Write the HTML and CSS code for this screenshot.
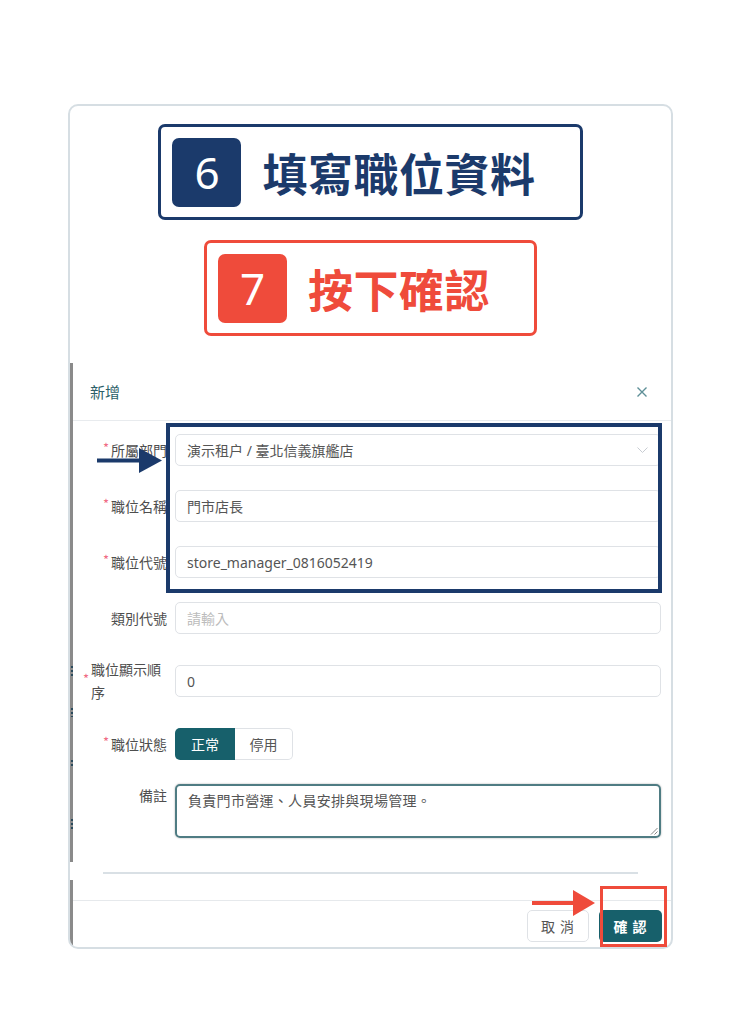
FILE: index.html
```html
<!DOCTYPE html>
<html lang="zh-Hant">
<head>
<meta charset="utf-8">
<title>新增職位</title>
<link rel="stylesheet" href="styles.css">
</head>
<body>
<div class="card">
  <div class="banners">
    <div class="banner banner-navy">
      <div class="badge">6</div>
      <div class="title">填寫職位資料</div>
    </div>
    <div class="banner banner-red">
      <div class="badge">7</div>
      <div class="title">按下確認</div>
    </div>
  </div>

  <div class="dialog">
    <div class="dlg-header">
      <span class="dlg-title">新增</span>
      <svg class="close" width="10" height="10" viewBox="0 0 10 10"><path d="M0.5 0.5 L9.5 9.5 M9.5 0.5 L0.5 9.5" stroke="#5e8f97" stroke-width="1.4" fill="none"/></svg>
    </div>

    <div class="dlg-body">
      <div class="row">
        <div class="label"><span class="req">*</span><span class="ltext">所屬部門</span></div>
        <div class="control select">
          <span>演示租户 / 臺北信義旗艦店</span>
          <svg class="chev" width="11" height="6" viewBox="0 0 11 6"><path d="M0.5 0.5 L5.5 5.5 L10.5 0.5" stroke="#c8ccd2" stroke-width="1" fill="none"/></svg>
        </div>
      </div>
      <div class="row">
        <div class="label"><span class="req">*</span><span class="ltext">職位名稱</span></div>
        <div class="control">門市店長</div>
      </div>
      <div class="row">
        <div class="label"><span class="req">*</span><span class="ltext">職位代號</span></div>
        <div class="control">store_manager_0816052419</div>
      </div>
      <div class="row">
        <div class="label"><span class="ltext">類別代號</span></div>
        <div class="control placeholder">請輸入</div>
      </div>
      <div class="row row-tall">
        <div class="label"><span class="req">*</span><span class="ltext">職位顯示順序</span></div>
        <div class="control">0</div>
      </div>
      <div class="row">
        <div class="label"><span class="req">*</span><span class="ltext">職位狀態</span></div>
        <div class="toggle">
          <span class="tg tg-on">正常</span>
          <span class="tg tg-off">停用</span>
        </div>
      </div>
      <div class="row row-top">
        <div class="label"><span class="ltext">備註</span></div>
        <div class="textarea">
          負責門市營運、人員安排與現場管理。
          <svg class="grip" width="8" height="8" viewBox="0 0 8 8"><path d="M7.5 1 L1 7.5 M7.5 4.5 L4.5 7.5" stroke="#777" stroke-width="0.9" fill="none"/></svg>
        </div>
      </div>
    </div>

    <div class="divider"></div>

    <div class="dlg-footer">
      <span class="btn btn-cancel">取 消</span>
      <span class="btn btn-primary">確 認</span>
    </div>
  </div>
</div>

<div class="hl hl-navy"></div>
<svg class="arrow arrow-navy" width="66" height="25" viewBox="0 0 66 25">
  <rect x="0" y="10.5" width="44" height="4" fill="#1b3a6b"/>
  <polygon points="42,0 65,12.5 42,25" fill="#1b3a6b"/>
</svg>

<div class="hl hl-red"></div>
<svg class="arrow arrow-red" width="65" height="26" viewBox="0 0 65 26">
  <rect x="1" y="11" width="44" height="4" fill="#ef4b3b"/>
  <polygon points="42,0 64,13 42,26" fill="#ef4b3b"/>
</svg>
</body>
</html>
```

FILE: styles.css
```css
* { box-sizing: border-box; }

body {
  margin: 0;
  background: #ffffff;
  font-family: "Noto Sans", "Noto Sans CJK TC", sans-serif;
  color: #555555;
}

.card {
  margin: 104px 0 0 68px;
  width: 605px;
  height: 845px;
  border: 2px solid #d6dee3;
  border-radius: 10px;
  overflow: hidden;
  padding-top: 18px;
  display: flex;
  flex-direction: column;
}

.banners {
  display: flex;
  flex-direction: column;
  align-items: center;
  gap: 20px;
}

.banner {
  display: flex;
  align-items: center;
  gap: 21px;
  height: 96px;
  border: 3px solid;
  border-radius: 7px;
  padding: 0 44px 0 11px;
  background: #fff;
}

.banner-navy { border-color: #1b3a6b; color: #1b3a6b; }
.banner-red { border-color: #ef4b3b; color: #ef4b3b; }

.badge {
  width: 69px;
  height: 69px;
  border-radius: 7px;
  color: #ffffff;
  font-family: "Noto Sans", sans-serif;
  font-size: 44px;
  line-height: 1;
  display: flex;
  align-items: center;
  justify-content: center;
}
.banner-navy .badge { background: #1b3a6b; }
.banner-red .badge { background: #ef4b3b; }

.title {
  font-family: "Noto Sans CJK TC", sans-serif;
  font-weight: 700;
  font-size: 45px;
  line-height: 1;
  letter-spacing: 0.5px;
}

.dialog {
  margin-top: 27px;
  flex: 1;
  padding-left: 3px;
  display: flex;
  flex-direction: column;
  background:
    repeating-linear-gradient(#2a4a5c 0 2px, #8e8e8e 2px 4px) 1px 303px / 2px 11px no-repeat,
    repeating-linear-gradient(#2a4a5c 0 2px, #8e8e8e 2px 4px) 1px 345px / 2px 9px no-repeat,
    repeating-linear-gradient(#2a4a5c 0 2px, #8e8e8e 2px 4px) 1px 397px / 2px 7px no-repeat,
    repeating-linear-gradient(#2a4a5c 0 2px, #8e8e8e 2px 4px) 1px 456px / 2px 11px no-repeat,
    linear-gradient(to bottom, #8a8a8a 0 499px, #ffffff 499px 517px, #8a8a8a 517px) 0 0 / 3px 100% no-repeat;
}

.dlg-header {
  height: 58px;
  border-bottom: 1px solid #e8ebee;
  display: flex;
  align-items: center;
  justify-content: space-between;
  padding: 0 24px 0 17px;
}

.dlg-title {
  font-family: "Noto Sans CJK TC", sans-serif;
  font-size: 15px;
  color: #2c5f69;
}

.close { display: block; }

.dlg-body {
  padding: 13px 10px 0 10px;
  display: flex;
  flex-direction: column;
  gap: 24px;
}

.row {
  display: flex;
  align-items: center;
}
.row-tall { height: 46px; }
.row-top { align-items: flex-start; }

.label {
  width: 92px;
  flex: none;
  padding-right: 8px;
  display: flex;
  align-items: center;
  justify-content: flex-end;
  font-family: "Noto Sans CJK TC", sans-serif;
  font-size: 14px;
  line-height: 23px;
  color: #4e4e4e;
}

.req {
  color: #f06a84;
  font-size: 13px;
  line-height: 1;
  margin-right: 2px;
  margin-top: -5px;
  flex: none;
}

.ltext { min-width: 0; }

.control {
  flex: 1;
  height: 32px;
  border: 1px solid #dfe2e6;
  border-radius: 5px;
  padding: 0 11px;
  display: flex;
  align-items: center;
  font-family: "Noto Sans", "Noto Sans CJK TC", sans-serif;
  font-size: 14px;
  color: #555555;
}

.select { justify-content: space-between; padding-right: 12px; }
.chev { display: block; }

.placeholder { color: #bcbcbc; }

.toggle {
  display: flex;
  height: 32px;
}
.tg {
  display: flex;
  align-items: center;
  justify-content: center;
  font-family: "Noto Sans CJK TC", sans-serif;
  font-size: 14px;
}
.tg-on {
  width: 60px;
  background: #17606b;
  color: #ffffff;
  border-radius: 5px 0 0 5px;
}
.tg-off {
  width: 58px;
  border: 1px solid #dfe2e6;
  border-left: none;
  border-radius: 0 5px 5px 0;
  color: #555555;
}

.textarea {
  flex: 1;
  position: relative;
  height: 54px;
  border: 2px solid #4f7c83;
  border-radius: 5px;
  box-shadow: 0 0 2px rgba(0, 0, 0, 0.35);
  padding: 3px 11px;
  font-family: "Noto Sans CJK TC", sans-serif;
  font-size: 14px;
  line-height: 22px;
  letter-spacing: 0.3px;
  color: #555555;
}
.grip {
  position: absolute;
  right: 1px;
  bottom: 1px;
}

.divider {
  height: 2px;
  background: #d9e0e5;
  margin: 34px 33px 26px 30px;
}

.dlg-footer {
  border-top: 1px solid #e6e9ec;
  padding: 9px 9px 0 0;
  display: flex;
  justify-content: flex-end;
  gap: 10px;
}

.btn {
  height: 32px;
  border-radius: 5px;
  display: flex;
  align-items: center;
  justify-content: center;
  font-family: "Noto Sans CJK TC", sans-serif;
  font-size: 14px;
  white-space: pre;
  letter-spacing: 1px;
}
.btn-cancel {
  width: 62px;
  border: 1px solid #dfe2e6;
  color: #555555;
  background: #ffffff;
}
.btn-primary {
  width: 63px;
  background: #17606b;
  color: #ffffff;
  font-weight: 700;
}

/* annotation overlays */
.hl {
  position: absolute;
}
.hl-navy {
  left: 166px;
  top: 423px;
  width: 496px;
  height: 170px;
  border: 4px solid #1b3a6b;
}
.hl-red {
  left: 600px;
  top: 886px;
  width: 67px;
  height: 61px;
  border: 3px solid #ef4b3b;
}
.arrow { position: absolute; display: block; }
.arrow-navy { left: 97px; top: 448px; }
.arrow-red { left: 531px; top: 890px; }
```
